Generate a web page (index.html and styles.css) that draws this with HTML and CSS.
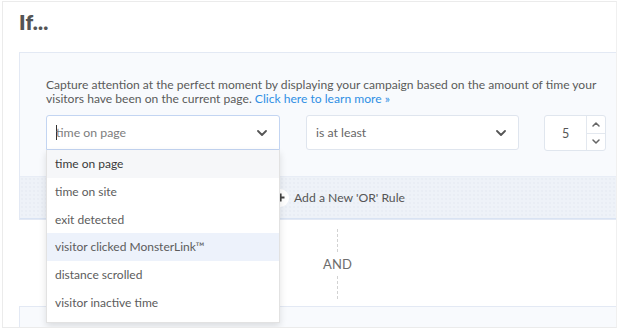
FILE: index.html
```html
<!DOCTYPE html>
<html lang="en">
<head>
  <meta charset="UTF-8" />
  <meta name="viewport" content="width=device-width, initial-scale=1.0" />
  <title>Display Rules</title>
  <link rel="stylesheet" href="styles.css">
</head>
<body>
  <div class="card">
    <h1>If...</h1>

    <div class="rule-group">
      <div class="rule">
        <p class="desc">Capture attention at the perfect moment by displaying your campaign based on the amount of time your visitors have been on the current page. <a href="#">Click here to learn more &raquo;</a></p>

        <div class="fields">
          <div class="select-wrap">
            <div class="select is-open">
              <span class="caret"></span>
              <span class="value muted">time on page</span>
              <svg class="chev" width="10" height="6" viewBox="0 0 10 6"><path d="M1 1l4 4 4-4" fill="none" stroke="#555" stroke-width="1.8" stroke-linecap="round" stroke-linejoin="round"/></svg>
            </div>
            <ul class="options">
              <li class="hover">time on page</li>
              <li>time on site</li>
              <li>exit detected</li>
              <li class="active">visitor clicked MonsterLink&trade;</li>
              <li>distance scrolled</li>
              <li>visitor inactive time</li>
            </ul>
          </div>

          <div class="select compare">
            <span class="value">is at least</span>
            <svg class="chev" width="10" height="6" viewBox="0 0 10 6"><path d="M1 1l4 4 4-4" fill="none" stroke="#555" stroke-width="1.8" stroke-linecap="round" stroke-linejoin="round"/></svg>
          </div>

          <div class="number">
            <span class="num">5</span>
            <div class="spin">
              <span><svg width="8" height="5" viewBox="0 0 8 5"><path d="M1 4l3-3 3 3" fill="none" stroke="#666" stroke-width="1.5" stroke-linecap="round" stroke-linejoin="round"/></svg></span>
              <span><svg width="8" height="5" viewBox="0 0 8 5"><path d="M1 1l3 3 3-3" fill="none" stroke="#666" stroke-width="1.5" stroke-linecap="round" stroke-linejoin="round"/></svg></span>
            </div>
          </div>
          <span class="unit">seconds</span>
        </div>
      </div>

      <div class="or-bar">
        <button class="add-or">
          <span class="plus">
            <svg width="9" height="9" viewBox="0 0 9 9"><path d="M4.5 0.5v8M0.5 4.5h8" stroke="#444" stroke-width="2.2"/></svg>
          </span>
          Add a New 'OR' Rule
        </button>
      </div>
    </div>

    <div class="and-sep">
      <span class="line"></span>
      <span class="and">AND</span>
      <span class="line"></span>
    </div>

    <div class="rule-group next"></div>
  </div>
</body>
</html>
```

FILE: styles.css
```css
body {
  margin: 0;
  background: #fff;
  font-family: "Lato", "Open Sans", sans-serif;
  color: #5a5a5a;
}
.card {
  margin: 1px 0 0 2px;
  width: 615px;
  height: 327px;
  border: 1px solid #ebebeb;
  border-right-color: #f0f0f0;
  padding-left: 16px;
  box-sizing: border-box;
  overflow: hidden;
  position: relative;
}
h1 {
  margin: 0 0 18px;
  padding-top: 8px;
  font-size: 21px;
  line-height: 24px;
  font-weight: 800;
  color: #555;
  letter-spacing: 0.2px;
}
.rule-group {
  background: #f8fafd;
  border: 1px solid #e3e9f4;
  border-right: none;
}
.rule {
  padding: 25px 0 25px 26px;
}
.desc {
  margin: 0 0 9px;
  font-size: 12.1px;
  line-height: 14px;
  padding-right: 8px;
}
.desc a {
  color: #2f8fe4;
  text-decoration: none;
}
.fields {
  display: flex;
  align-items: flex-start;
  position: relative;
}
.fields > * {
  flex-shrink: 0;
}
.select-wrap {
  position: relative;
  width: 234px;
  margin-right: 26px;
  z-index: 2;
}
.select {
  height: 35px;
  box-sizing: border-box;
  background: #fff;
  border: 1px solid #dfe5ee;
  border-radius: 3px;
  display: flex;
  align-items: center;
  padding: 0 12px 0 9px;
  font-size: 12.3px;
  color: #666;
}
.select.is-open {
  border-color: #c3d5f2;
  border-radius: 3px 3px 0 0;
}
.select .value {
  flex: 1;
}
.select .muted {
  color: #7d7d7d;
}
.caret {
  width: 1px;
  height: 15px;
  background: #333;
  margin-right: -1px;
}
.compare {
  width: 213px;
  margin-right: 25px;
}
.number {
  width: 62px;
  height: 36px;
  box-sizing: border-box;
  background: #fff;
  border: 1px solid #e0e6ee;
  border-radius: 3px;
  display: flex;
}
.num {
  flex: 1;
  display: flex;
  align-items: center;
  justify-content: center;
  font-size: 12.5px;
  color: #555;
}
.spin {
  width: 18px;
  border-left: 1px solid #e3e8ef;
  display: flex;
  flex-direction: column;
}
.spin span {
  flex: 1;
  display: flex;
  align-items: center;
  justify-content: center;
}
.spin span + span {
  border-top: 1px solid #e3e8ef;
}
.unit {
  margin-left: 11px;
  margin-top: 10px;
  font-size: 12px;
  color: #aaa;
}
.options {
  position: absolute;
  top: 100%;
  left: 0;
  right: 0;
  margin: 0;
  padding: 0 0 6px;
  list-style: none;
  background: #fff;
  border: 1px solid #e2e2e2;
  border-top: none;
  box-shadow: 0 3px 7px rgba(0, 0, 0, 0.12);
}
.options li {
  height: 27.7px;
  display: flex;
  align-items: center;
  padding-left: 8px;
  font-size: 12px;
  color: #5c5c5c;
}
.options li.hover {
  background: #f6f7f9;
  color: #3a3a3a;
}
.options li.active {
  background: #edf2fb;
}
.or-bar {
  height: 43px;
  background-color: #eef2f8;
  background-image: radial-gradient(#e2e7f0 0.6px, transparent 0.8px);
  background-size: 4px 4px;
  border-top: 1px solid #e8edf6;
  border-bottom: 1px solid #d9e3f3;
  box-sizing: border-box;
  display: flex;
  align-items: center;
  justify-content: center;
  padding-left: 40px;
}
.add-or {
  display: flex;
  align-items: center;
  gap: 5px;
  border: none;
  background: none;
  font-family: inherit;
  font-size: 12.2px;
  color: #555;
  padding: 0;
}
.plus {
  width: 18px;
  height: 18px;
  border-radius: 50%;
  background: #fff;
  display: flex;
  align-items: center;
  justify-content: center;
}
.and-sep {
  height: 86px;
  display: flex;
  flex-direction: column;
  align-items: center;
  padding-left: 40px;
  padding-top: 9px;
  box-sizing: border-box;
}
.and-sep .line {
  width: 0;
  height: 23px;
  border-left: 1px dashed #d2d2d2;
}
.and {
  padding: 6px 0 5px;
  font-size: 13px;
  line-height: 13px;
  color: #6d6d6d;
  letter-spacing: 0.2px;
}
.next {
  height: 40px;
}
```
